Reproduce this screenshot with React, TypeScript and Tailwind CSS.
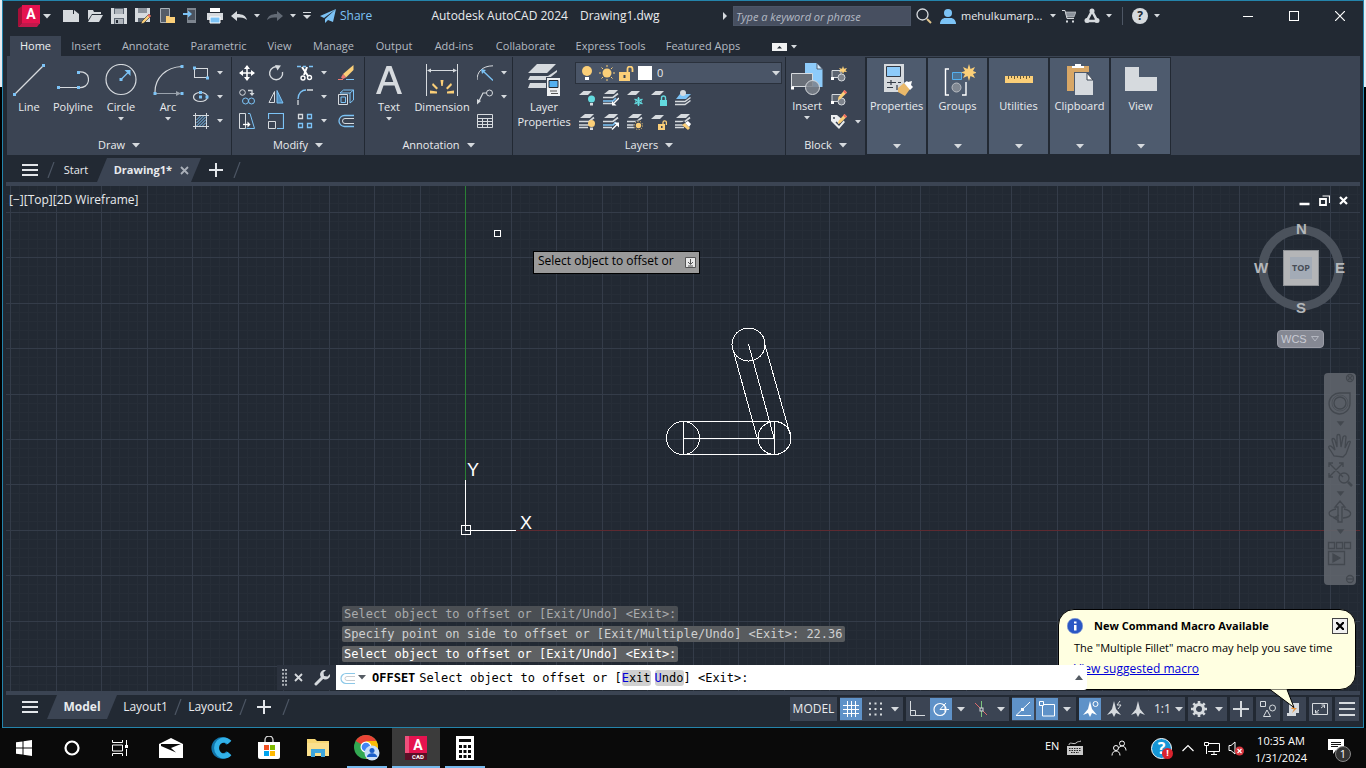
import React from "react";

type Kids = { children?: React.ReactNode };

const G = "#d6dade";
const B = "#7cc3f6";
const Y = "#fbcf78";
const P = "#3b4453";

function Ico({ s = 16, w, h, children, label }: Kids & { s?: number; w?: number; h?: number; label?: string }) {
  const ww = w ?? s;
  const hh = h ?? s;
  return (
    <svg width={ww} height={hh} viewBox={`0 0 ${ww} ${hh}`} fill="none" className="shrink-0" aria-hidden={label ? undefined : true} aria-label={label}>
      {children}
    </svg>
  );
}

const Caret = () => (
  <Ico w={6} h={4}><path d="M0 0h6L3 3.6z" fill={G} /></Ico>
);
const BigCaret = () => (
  <Ico w={8} h={5}><path d="M0 0h8L4 4.6z" fill={G} /></Ico>
);

function Big({ icon, label, caret, width, lead = "leading-4" }: { icon: React.ReactNode; label: React.ReactNode; caret?: boolean; width: string; lead?: string }) {
  return (
    <button className={`flex shrink-0 flex-col items-center whitespace-nowrap text-[#e9ebee] ${width} ${lead}`}>
      {icon}
      <span className="mt-[3px]">{label}</span>
      {caret && <span className="mt-[2px]"><Caret /></span>}
    </button>
  );
}

function Small({ icon, label, caret }: { icon: React.ReactNode; label: string; caret?: boolean }) {
  return (
    <button aria-label={label} className="flex h-6 items-center gap-2">
      {icon}
      {caret && <Caret />}
    </button>
  );
}

function Panel({ title, width, children }: Kids & { title: string; width: string }) {
  return (
    <section className={`flex shrink-0 flex-col border-r border-[#222933] ${width}`}>
      <div className="flex flex-1 pt-[7px]">{children}</div>
      <button className="flex h-5 items-center justify-center gap-[7px] text-[#e9ebee]">
        {title} <BigCaret />
      </button>
    </section>
  );
}

function Collapsed({ label, icon }: { label: string; icon: React.ReactNode }) {
  return (
    <button className="flex w-[61px] shrink-0 flex-col items-center border border-[#222933] bg-[#4e5b6e] pt-[4px] pb-[5px] leading-4 text-[#e9ebee]">
      {icon}
      <span className="whitespace-nowrap">{label}</span>
      <span className="mt-auto"><BigCaret /></span>
    </button>
  );
}

const sq = (x: number, y: number, c = B) => <rect x={x - 1.5} y={y - 1.5} width={3} height={3} fill={c} />;

/* ---- Draw ---- */
const LineI = <Ico s={32}><path d="M2 30L30 2" stroke={G} strokeWidth={1.2} />{sq(1.5, 30.5)}{sq(30.5, 1.5)}</Ico>;
const PolyI = <Ico s={32}><path d="M1.5 23.5h20c4.5.5 10-1.5 10-8s-5.5-8-10-7.500" stroke={G} strokeWidth={1.2} />{sq(1.5, 23.5)}{sq(21.5, 23.5)}{sq(21.5, 8.5)}</Ico>;
const CircI = <Ico s={32}><circle cx={16} cy={15.5} r={15} stroke={G} strokeWidth={1.2} /><path d="M16 15.5L23 8.5" stroke={B} strokeWidth={1.3} /><path d="M25.5 6v6l-6-6z" fill={B} />{sq(16, 15.5)}</Ico>;
const ArcI = <Ico s={32}><path d="M3 28C3 14 14 3 30 2.5" stroke={G} strokeWidth={1.2} /><path d="M3 29.5h22" stroke="#9aa2ac" /><path d="M24 27v5l5-2.500z" fill="#9aa2ac" />{sq(3, 29.5)}{sq(30, 29.5)}{sq(30, 2.5)}</Ico>;
const RectI = <Ico s={16}><rect x={1.5} y={3.5} width={13} height={9} stroke={G} />{sq(1.5, 3)}{sq(14.5, 13)}</Ico>;
const EllI = <Ico s={16}><ellipse cx={7.5} cy={8} rx={7} ry={4.5} stroke={G} strokeWidth={1.2} />{sq(7.5, 8)}{sq(14, 8)}{sq(7.5, 3.5)}</Ico>;
const HatchI = <Ico s={16}><path d="M2.5 0v16M13.5 0v16M0 2.5h16M0 13.5h16" stroke={G} /><path d="M3.5 7l4-4M3.5 10l7-7M3.5 13l9.500-9.500M6.500 13l6.500-6.500M9.500 13l3.500-3.500" stroke={B} /></Ico>;

/* ---- Modify ---- */
const MoveI = <Ico s={16}><path d="M8 1v14M1 8h14" stroke="#fff" strokeWidth={1.6} /><path d="M8 0l3 4H5zM8 16l3-4H5zM0 8l4-3v6zM16 8l-4-3v6z" fill="#fff" /></Ico>;
const RotI = <Ico s={16}><path d="M10.5 2.200A6.500 6.500 0 1 0 14.500 7" stroke={G} strokeWidth={1.4} /><path d="M7 0l6 .5-3.500 5z" fill={G} /></Ico>;
const TrimI = <Ico s={16}><path d="M0 1.5h4M6 1.5h3M12 1.500h4" stroke={B} strokeWidth={1.4} /><path d="M5 2l6 9M10 2L7 10" stroke="#fff" strokeWidth={2} /><circle cx={6} cy={13} r={2} stroke="#fff" strokeWidth={1.4} /><circle cx={12.5} cy={12.5} r={2} stroke="#fff" strokeWidth={1.4} /></Ico>;
const EraseI = <Ico s={16}><path d="M15.5 0v5L8 12.500 5 9z" fill={Y} /><path d="M5 9l3 3.500-3 1.500-2-1.500z" fill="#ef7a72" /><path d="M0 14.500h5" stroke="#ef7a72" /><path d="M8 14.500h8" stroke={B} /></Ico>;
const CopyI = <Ico s={16}><circle cx={3.5} cy={3.5} r={2.8} stroke={G} /><path d="M9 1.500h4v3" stroke={G} strokeWidth={1.3} /><path d="M10.500 4h5L13 7z" fill={G} /><circle cx={6.5} cy={12} r={3} stroke={B} /><circle cx={12.5} cy={12} r={3} stroke={B} /></Ico>;
const MirrI = <Ico s={16}><path d="M6.500 2.500v11H1z" stroke={G} /><path d="M9 1.500l6 12.500H9z" stroke={B} fill="#4f8dbd" /></Ico>;
const FillI = <Ico s={16}><path d="M1 10C1 4 5 1 9 1" stroke={B} strokeWidth={1.3} /><path d="M1 11v5M10 1h6" stroke={G} strokeWidth={1.3} /></Ico>;
const ExplI = <Ico s={16}><path d="M.5 5.500h9v10h-9z" stroke={G} /><path d="M3 8h4.500v5.500H3z" stroke={B} /><path d="M2 4l3.500-3h10L12 4zM15.500 1v10L12 14V4" stroke={B} /></Ico>;
const StrI = <Ico s={16}><path d="M.5.5h6v15h-6z" stroke={G} /><path d="M9 .5h2l4.500 15h-8" stroke={B} /><path d="M4 11.500h6" stroke="#fff" strokeWidth={1.3} /><path d="M8.500 8.500v6l3-3z" fill="#fff" /></Ico>;
const ScaI = <Ico s={16}><path d="M.5 6V.5h15v15H9" stroke={B} strokeWidth={1.2} /><path d="M.5 8.500h7v7h-7z" stroke={G} /></Ico>;
const ArrI = <Ico s={16}><path d="M1.500 1.500h4v4h-4z" stroke={G} strokeWidth={1.3} /><path d="M10.500 1.500h4v4h-4zM1.500 10.500h4v4h-4zM10.500 10.500h4v4h-4z" stroke={B} strokeWidth={1.3} /></Ico>;
const OffI = <Ico s={16}><path d="M16 2.500H6.500a5.500 5.500 0 0 0 0 11H16" stroke={B} strokeWidth={1.3} /><path d="M16 5.500H7a2.500 2.500 0 0 0 0 5H16" stroke={G} /></Ico>;

/* ---- Annotation ---- */
const TextI = <Ico s={32}><path fillRule="evenodd" d="M13.500 2h5L29 30h-4.500l-3-8.500h-11L7.500 30H3zM16 6.500L11.700 18h8.600z" fill={G} /></Ico>;
const DimI = <Ico s={32}><path d="M.5 0v32M31.500 0v32M2 6.500h28" stroke={G} /><path d="M1 6.500l4-2v4zM31 6.500l-4-2v4z" fill={G} /><path d="M4 26.500l7 1v2H4zM28 26.500l-7 1v2h7zM7 19l5 5-1.500 1.500L6 21zM25 19l-5 5 1.500 1.500L26 21zM14.500 16h3l-.8 6h-1.400z" fill={Y} /></Ico>;
const LeadArcI = <Ico s={16}><path d="M0 15C0 7 5 1 16 .8" stroke={G} /><path d="M16 15.500L6 6" stroke={B} strokeWidth={1.3} /><path d="M4 4l5 1-4 4z" fill={B} /></Ico>;
const LeadI = <Ico s={16}><circle cx={12.5} cy={4} r={3} stroke={G} /><path d="M9.500 4H6L1.500 13" stroke={G} strokeWidth={1.2} /><path d="M0 15.500V10l4 2z" fill={G} /></Ico>;
const TabI = <Ico s={16}><path d="M.5 1.500h15v13H.5zM.5 5.500h15M.5 8.500h15M.5 11.500h15M5.500 5v9M10.500 5v9" stroke={G} /></Ico>;

/* ---- Layers ---- */
const LPropI = <Ico s={32}><path d="M9 0h19l-9 9H0zM2 12h18l9-6v2l-10 8H0zM2 19h16v5H0z" fill={G} /><path d="M18 13h14v19H18z" fill={P} /><path d="M19 14h13v18H19z" fill="#eef0f2" /><path d="M21 16.500h9v7h-9z" fill="#54b0f0" stroke="#222933" /><path d="M22 27h7M23 29.500h7" stroke="#555" /></Ico>;
const stack = (b: boolean) => <><path d="M6 0h9l-4 4H1z" fill={G} /><path d="M0 7.500h10l5-4" stroke={G} strokeWidth={1.7} /><path d="M0 11h10l3-3" stroke={b ? B : G} strokeWidth={1.7} /><path d="M0 13.500h9" stroke={G} strokeWidth={1.5} /></>;
const flat = <path d="M4.500 1H13l-4 4H0z" fill={G} />;
const layerRowA: [string, React.ReactNode][] = [
  ["Off", <Ico s={16}>{flat}<circle cx={12.5} cy={9} r={3.5} fill="#63dbe0" /><path d="M11 13h3v2.500h-3z" fill={G} /></Ico>],
  ["Isolate", <Ico s={16}>{stack(true)}<path d="M16 8l-5 5" stroke="#fff" strokeWidth={1.4} /><path d="M9 15.500V11l4.500 4.500z" fill="#fff" /></Ico>],
  ["Freeze", <Ico s={16}>{flat}<path d="M11.500 7v9M7.500 9l8 5M15.500 9l-8 5" stroke="#63dbe0" strokeWidth={1.3} /><circle cx={11.5} cy={11.5} r={2.8} stroke="#63dbe0" /></Ico>],
  ["Lock", <Ico s={16}>{flat}<path d="M9 10h7v6H9z" fill="#63dbe0" /><path d="M10.500 10V8a2 2 0 0 1 4 0v2" stroke="#63dbe0" strokeWidth={1.4} /></Ico>],
  ["Make current", <Ico s={16}><path d="M5 4h11l-5 5H1z" fill={B} /><circle cx={8} cy={3} r={3} fill={G} /><path d="M0 11.500h10l5.500-4M0 14.500h10l5.500-4" stroke={G} strokeWidth={1.5} /></Ico>],
];
const layerRowB: [string, React.ReactNode][] = [
  ["Turn all on", <Ico s={16}>{stack(false)}<circle cx={12.5} cy={9.5} r={3.5} fill={Y} /><path d="M11 13.500h3V16h-3z" fill={G} /></Ico>],
  ["Unisolate", <Ico s={16}>{stack(true)}<path d="M9 15.500l5-5" stroke="#fff" strokeWidth={1.4} /><path d="M16 8.500v5L11 8.500z" fill="#fff" /></Ico>],
  ["Thaw all", <Ico s={16}>{stack(false)}<circle cx={11.5} cy={11.5} r={5} fill={P} /><circle cx={11.5} cy={11.5} r={4.2} stroke={Y} strokeDasharray="1 1.6" /><circle cx={11.5} cy={11.5} r={2.7} fill={Y} /></Ico>],
  ["Unlock", <Ico s={16}>{flat}<path d="M7 10h7v6H7z" fill={Y} /><path d="M12 10V8.500a1.700 1.700 0 0 1 3.400 0V11" stroke={Y} strokeWidth={1.3} /><path d="M10 12h1.500v2H10z" fill={P} /></Ico>],
  ["Match layer", <Ico s={16}>{stack(false)}<path d="M6 9l3-2 7 6-3 3z" fill={P} /><path d="M7 11l3-2 5 5-2 2z" fill={Y} /><path d="M10 9l3-2 3 3-2 3z" fill="#fff" /></Ico>],
];

/* ---- Block ---- */
const InsI = <Ico s={32}><path d="M14 0h12l5.500 6v18H14z" fill="#8dcbfa" /><path d="M26 0l5.500 6H26z" fill="#d6ecfd" stroke={P} strokeWidth={0.8} /><path d="M.5 10.500h21v13H.5z" fill="#6a7079" stroke={G} /><circle cx={21.5} cy={24.5} r={7} fill="#7d838c" fillOpacity={0.85} stroke={G} />{sq(1.5, 25, "#fff")}</Ico>;
const blk = <><path d="M1 4.500h9v7H1z" stroke={G} fill="#5d6571" /><circle cx={10.5} cy={11.5} r={3.5} fill="#7d838c" stroke={G} />{sq(1.5, 12.5, "#fff")}</>;
const pencil = <><path d="M13.500 0L16 2.500 9.500 9 7 10l.5-3z" fill={Y} /><path d="M12 1.500L13.500 0 16 2.500 14.500 4z" fill="#ef6b62" /></>;
const CreateI = <Ico s={16}>{blk}<path d="M12 0l1 2.800 3-.8-1.500 2.300L16 6l-3-.3L12 8l-1-2.500L8 6l1.500-1.800L8 2l3 .8z" fill={Y} /></Ico>;
const EditI = <Ico s={16}>{blk}{pencil}</Ico>;
const AttrI = <Ico s={16}><path d="M0 1h6l8 7-6 7L0 7z" fill="#eceef0" /><circle cx={3} cy={4} r={1} fill={P} /><path d="M5 8l3 3 4-5" stroke={P} strokeWidth={1.5} />{pencil}</Ico>;

/* ---- Collapsed panels ---- */
const PropI = <Ico s={36}><path d="M5 2h20v28H5z" fill={G} /><path d="M7.500 4.500h14v10h-14z" fill="#8dcbfa" stroke="#333b47" /><path d="M8 20.500h9M8 25.500h6M12 18v5M18 23v5M19 20.500h3" stroke="#333b47" strokeWidth={1.2} /><path d="M19 26l6-5 6 6-5 7-7-4z" fill="#eab96a" /><path d="M25 21l3-2 1 1 4-1-1 4 2 2-3 3z" fill="#fff" /></Ico>;
const GrpI = <Ico s={36}><path d="M9 7H5.500v26H9M22 33h4V20" stroke="#fff" strokeWidth={1.4} /><path d="M12.500 10.500h9v7h-9z" fill="#4e7597" stroke="#54b0f0" /><circle cx={16.5} cy={25.5} r={4.5} fill="#818892" stroke="#b8bcc2" /><path d="M29 2l1.500 5L35 5l-2 4 4 1.500-4 1.500 2 4-4.500-2L29 19l-1.500-5L23 16l2-4-4-1.500L25 9l-2-4 4.500 2z" fill={Y} /></Ico>;
const UtilI = <Ico s={36}><path d="M4 14h28v7H4z" fill={Y} /><path d="M7.500 14v3M10.500 14v2M13.500 14v3M16.500 14v2M19.500 14v3M22.500 14v2M25.500 14v3M28.500 14v2" stroke="#6b5a35" /></Ico>;
const ClipI = <Ico s={36}><path d="M5 4h22v25H5z" fill="#d8a766" /><path d="M10 6V4h3V2h6v2h3v2z" fill="#fff" /><path d="M12 10h19v24H12z" fill="#4e5b6e" /><path d="M13 11h12l6 7v15H13z" fill={G} /><path d="M25 11l6 7h-6z" fill="#fff" stroke="#3b4453" /></Ico>;
const ViewI = <Ico s={36}><path d="M2 5h14v10h18v14H2z" fill={G} /></Ico>;

/* ---- Title bar icons ---- */
const Logo = <Ico w={24} h={24}><path d="M1 5l4-3v17l-4 4z" fill="#a50f38" /><path d="M5 1h18v19H5z" fill="#e5134f" /><path d="M1 23l4-4h18l-3 4z" fill="#c2184b" /></Ico>;
const NewI = <Ico s={16}><path d="M0 2h10v4h6v8H0z" fill={G} /><path d="M11 2l5 4h-5z" fill={G} /></Ico>;
const OpenI = <Ico s={16}><path d="M1 2h5l1 2h7v2H5L1 12z" fill={G} /><path d="M5 7h11l-4 7H1z" fill={G} /></Ico>;
const SaveI = <Ico s={16}><path d="M0 0h16v16H0z" fill={G} /><path d="M3 0h10v6H3zM3 10h10v6H3z" fill="#5d6672" /><path d="M4 1h8v5H4zM4 11h8v5H4z" fill="#aeb4bb" /><path d="M5 12h2v3H5z" fill="#222933" /></Ico>;
const SaveAsI = <Ico s={16}><path d="M0 0h15v14H0z" fill={G} /><path d="M3 0h9v5H3z" fill="#8b929b" /><path d="M3 10h8v4H3z" fill="#5d6672" /><path d="M14 6l2 2-7 7-3 1 1-3z" fill={Y} stroke="#222933" strokeWidth={0.6} /><path d="M14 6l2 2-1.500 1.500-2-2z" fill="#ef6b62" /></Ico>;
const WebOpenI = <Ico s={16}><path d="M1.500.5h9v14h-9z" fill="#555d68" stroke="#aab0b7" /><path d="M7 8h3l1 1h5v6H7z" fill={Y} /></Ico>;
const WebSaveI = <Ico s={16}><path d="M4 0h9v15H4z" fill="#7d858f" /><path d="M5 2h7v10H5z" fill="#4a525e" /><path d="M0 6h6" stroke={B} strokeWidth={2} /><path d="M5 2.500v7L9 6z" fill={B} /></Ico>;
const PrintI = <Ico s={16}><path d="M3 0h10v4H3z" fill="#fff" /><path d="M0 5h16v7H0z" fill={G} /><path d="M3 9h10v6H3z" fill="#7cc3f6" stroke="#fff" /></Ico>;
const UndoI = <Ico s={16}><path d="M6 3v3c6 0 9 2 10 6-3-2.500-6-2.500-10-2.500V13L0 8z" fill={G} /></Ico>;
const RedoI = <Ico s={16}><path d="M10 3v3C4 6 1 8 0 12c3-2.500 6-2.500 10-2.500V13l6-5z" fill="#626a75" /></Ico>;
const ShareI = <Ico s={16}><path d="M16 1L0 8l4 2zM16 1L5 11v4l3-3 5 2z" fill={B} /></Ico>;

const quickAccess: [string, React.ReactNode][] = [
  ["New", NewI], ["Open", OpenI], ["Save", SaveI], ["Save As", SaveAsI], ["Open from Web", WebOpenI], ["Save to Web", WebSaveI], ["Plot", PrintI], ["Undo", UndoI],
];

function Hamburger({ label }: { label: string }) {
  return (
    <button aria-label={label}><Ico s={16}><path d="M0 3h16M0 8h16M0 13h16" stroke="#e3e6ea" strokeWidth={2} /></Ico></button>
  );
}
const Slash = () => <Ico w={8} h={16}><path d="M7 0L1 16" stroke="#4d5664" strokeWidth={1.2} /></Ico>;
const Plus = ({ label }: { label: string }) => (
  <button aria-label={label}><Ico s={14}><path d="M7 0v14M0 7h14" stroke="#e3e6ea" strokeWidth={2} /></Ico></button>
);

function TitleBar() {
  return (
    <header className="flex h-[30px] items-center text-[#e9ebee]">
      <button aria-label="Application menu" className="relative ml-[14px] flex w-[24px]">
        {Logo}
        <span className="absolute inset-0 flex items-center justify-center pb-1 pl-1 font-['Roboto'] text-[14px] font-bold text-white">A</span>
      </button>
      <button aria-label="Application options" className="ml-[2px]"><BigCaret /></button>
      <div className="ml-3 flex items-center gap-2">
        {quickAccess.map(([n, ic]) => (
          <button key={n} aria-label={n}>{ic}</button>
        ))}
      </div>
      <button aria-label="Undo list" className="ml-[7px]"><Caret /></button>
      <button aria-label="Redo" className="ml-[7px]">{RedoI}</button>
      <button aria-label="Redo list" className="ml-[7px]"><Caret /></button>
      <button aria-label="Customize toolbar" className="ml-[7px]"><Ico w={8} h={8}><path d="M0 .5h8" stroke={G} /><path d="M0 3h8L4 7z" fill={G} /></Ico></button>
      <button className="ml-[9px] flex w-[52px] items-center gap-1 text-[12px] text-[#7cc3f6]">{ShareI}Share</button>
      <h1 className="flex flex-1 justify-center gap-3 text-[12px] whitespace-nowrap"><span>Autodesk AutoCAD 2024</span><span>Drawing1.dwg</span></h1>
      <Ico w={14} h={8}><path d="M4 0l4 4-4 4z" fill={G} /></Ico>
      <input aria-label="Search" placeholder="Type a keyword or phrase" className="h-5 w-[178px] border border-[#4b5566] bg-[#474f60] px-[2px] text-[11px] italic placeholder:text-[#b4bac4]" />
      <button aria-label="Find" className="ml-[5px]"><Ico s={16}><circle cx={6.5} cy={6.5} r={5.5} stroke={G} strokeWidth={1.3} /><path d="M11 11l4 4" stroke="#e0c48c" strokeWidth={2} /></Ico></button>
      <button className="ml-2 flex w-[117px] items-center gap-[5px]">
        <Ico s={16}><circle cx={8} cy={5} r={4} fill={B} /><path d="M0 16c0-4 3-6 5-6h6c2 0 5 2 5 6z" fill={B} /></Ico>
        <span className="w-[84px] text-left whitespace-nowrap">mehulkumarp...</span><Caret />
      </button>
      <button aria-label="App store" className="ml-[5px]"><Ico s={14}><path d="M0 1.500h3l2 8h7" stroke={G} /><path d="M3.500 3H14l-2 5H5z" fill="#8b929b" stroke={G} strokeWidth={0.6} /><path d="M4 11.500h2v2H4zM10 11.500h2v2h-2z" fill={G} /></Ico></button>
      <button aria-label="Autodesk app" className="ml-2 flex items-center gap-[6px]"><Ico s={16}><path d="M8 3L3 12.500M8 3l5 9.500M3 13h10" stroke={G} strokeWidth={2.6} /><circle cx={8} cy={3} r={2.5} fill={G} /><circle cx={3} cy={12.5} r={2.5} fill={G} /><circle cx={13} cy={12.5} r={2.5} fill={G} /></Ico><Caret /></button>
      <span className="mr-[9px] ml-[10px] h-[18px] w-px bg-[#4d5664]" />
      <button aria-label="Help" className="mr-[65px] flex items-center gap-[6px]">
        <span className="flex size-4 items-center justify-center rounded-full bg-[#d6dade] text-[12px] font-bold text-[#222933]">?</span><Caret />
      </button>
      <button aria-label="Minimize" className="flex w-[46px] justify-center"><Ico s={10}><path d="M0 5.500h10" stroke="#fff" /></Ico></button>
      <button aria-label="Maximize" className="flex w-[46px] justify-center"><Ico s={10}><rect x={0.5} y={0.5} width={9} height={9} stroke="#fff" /></Ico></button>
      <button aria-label="Close" className="flex w-[46px] justify-center"><Ico s={10}><path d="M0 0l10 10M10 0L0 10" stroke="#fff" strokeWidth={1.2} /></Ico></button>
    </header>
  );
}

const ribbonTabs: [string, string][] = [
  ["Insert", "w-[50px]"], ["Annotate", "w-[69px]"], ["Parametric", "w-[77px]"], ["View", "w-[45px]"], ["Manage", "w-[63px]"], ["Output", "w-[58px]"],
  ["Add-ins", "w-[62px]"], ["Collaborate", "w-[81px]"], ["Express Tools", "w-[89px]"], ["Featured Apps", "w-[96px]"],
];

function Ribbon() {
  return (
    <>
      <nav className="flex h-[25px] items-end pl-[7px] text-[#b4bac2]">
        <button className="h-5 w-[51px] bg-[#3b4453] text-[#eef0f2]">Home</button>
        {ribbonTabs.map(([t, w]) => (
          <button key={t} className={`h-5 whitespace-nowrap ${w}`}>{t}</button>
        ))}
        <button aria-label="Minimize ribbon" className="ml-[21px] flex h-[18px] items-center gap-1">
          <Ico w={15} h={8}><path d="M0 0h15v8H0z" fill="#f1f2f3" /><path d="M5 5.500h5L7.500 3z" fill="#222933" /></Ico><Caret />
        </button>
      </nav>
      <div className="mr-[3px] ml-1 flex h-[99px] bg-[#3b4453] pt-px">
        <Panel title="Draw" width="w-[225px]">
          <div className="flex flex-1 pl-px">
            <Big icon={LineI} label="Line" width="w-[42px]" />
            <Big icon={PolyI} label="Polyline" width="w-[46px]" />
            <Big icon={CircI} label="Circle" caret width="w-[50px]" />
            <Big icon={ArcI} label="Arc" caret width="w-[44px]" />
          </div>
          <div className="-mt-[3px] mr-[8px]">
            <Small label="Rectangle" icon={RectI} caret />
            <Small label="Ellipse" icon={EllI} caret />
            <Small label="Hatch" icon={HatchI} caret />
          </div>
        </Panel>
        <Panel title="Modify" width="w-[133px]">
          <div className="-mt-[3px] grid h-[72px] grid-cols-[29px_29px_41px_16px] pl-[7px]">
            <Small label="Move" icon={MoveI} /><Small label="Rotate" icon={RotI} /><Small label="Trim" icon={TrimI} caret /><Small label="Erase" icon={EraseI} />
            <Small label="Copy" icon={CopyI} /><Small label="Mirror" icon={MirrI} /><Small label="Fillet" icon={FillI} caret /><Small label="Explode" icon={ExplI} />
            <Small label="Stretch" icon={StrI} /><Small label="Scale" icon={ScaI} /><Small label="Array" icon={ArrI} caret /><Small label="Offset" icon={OffI} />
          </div>
        </Panel>
        <Panel title="Annotation" width="w-[148px]">
          <div className="flex flex-1 pl-px">
            <Big icon={TextI} label="Text" caret width="w-[46px]" />
            <Big icon={DimI} label="Dimension" width="w-[60px]" />
          </div>
          <div className="-mt-[3px] mr-[5px]">
            <Small label="Linear" icon={LeadArcI} caret />
            <Small label="Leader" icon={LeadI} caret />
            <Small label="Table" icon={TabI} />
          </div>
        </Panel>
        <Panel title="Layers" width="w-[273px]">
          <Big icon={LPropI} label={<>Layer<br />Properties</>} width="w-[62px]" lead="leading-[15px]" />
          <div className="-mt-[2px] mr-[3px] flex flex-1 flex-col">
            <div className="flex h-[22px] items-center border border-[#2a313c] bg-[#4a5567] pr-px pl-[5px]">
              <Ico s={14}><circle cx={6} cy={5} r={5} fill={Y} /><path d="M4 11h4v3H4z" fill="#fff" /></Ico>
              <span className="ml-1"><Ico s={16}><circle cx={8} cy={8} r={4.5} fill={Y} /><path d="M8 0v2M8 14v2M0 8h2M14 8h2M2.500 2.500L4 4M12 12l1.500 1.500M13.500 2.500L12 4M4 12l-1.500 1.500" stroke={Y} /></Ico></span>
              <span className="ml-1"><Ico s={15}><path d="M0 6h11v9H0z" fill={Y} /><path d="M8.500 6V3a2.500 2.500 0 0 1 5 0v3" stroke={Y} strokeWidth={1.8} /><path d="M4.500 9h2v3h-2z" fill={P} /></Ico></span>
              <span className="ml-1 size-[14px] bg-white" />
              <select aria-label="Current layer" className="h-full min-w-0 flex-1 appearance-none bg-transparent pl-[5px] text-[11px] text-[#e9ebee]"><option>0</option></select>
              <BigCaret />
            </div>
            <div className="mt-[2px] ml-1 flex h-6 items-center gap-2">{layerRowA.map(([n, i]) => <button key={n} aria-label={n}>{i}</button>)}</div>
            <div className="ml-1 flex h-6 items-center gap-2">{layerRowB.map(([n, i]) => <button key={n} aria-label={n}>{i}</button>)}</div>
          </div>
        </Panel>
        <Panel title="Block" width="w-[80px]">
          <div className="-mt-px flex flex-1"><Big icon={InsI} label="Insert" caret width="w-[42px]" /></div>
          <div className="-mt-[2px] mr-[4px]">
            <Small label="Create block" icon={CreateI} />
            <Small label="Edit block" icon={EditI} />
            <Small label="Edit attributes" icon={AttrI} caret />
          </div>
        </Panel>
        <Collapsed label="Properties" icon={PropI} />
        <Collapsed label="Groups" icon={GrpI} />
        <Collapsed label="Utilities" icon={UtilI} />
        <Collapsed label="Clipboard" icon={ClipI} />
        <Collapsed label="View" icon={ViewI} />
      </div>
    </>
  );
}

function FileTabs() {
  return (
    <nav className="flex h-[27px] items-center pt-[3px] pl-[19px] text-[#e9ebee]">
      <Hamburger label="File tab menu" />
      <span className="ml-[9px]"><Slash /></span>
      <button className="w-[42px] text-center">Start</button>
      <div className="flex h-full w-[104px] items-center justify-end gap-2 bg-[#3b4453] pr-[12px] [clip-path:polygon(10px_0,100%_0,calc(100%_-_10px)_100%,0_100%)]">
        <button className="font-bold whitespace-nowrap">Drawing1*</button>
        <button aria-label="Close drawing"><Ico s={9}><path d="M1 1l7 7M8 1L1 8" stroke="#aab0b9" strokeWidth={1.8} /></Ico></button>
      </div>
      <span className="mr-[10px] ml-[8px] flex"><Plus label="New drawing" /></span>
      <Slash />
    </nav>
  );
}

const steps = Array.from({ length: 340 }, (_, i) => i - 50);

function Grid() {
  return (
    <svg className="absolute inset-0 size-full" shapeRendering="crispEdges" aria-hidden="true">
      {[false, true].map((major) => (
        <g key={String(major)} stroke={major ? "#343c49" : "#262d37"}>
          {steps.filter((k) => (k % 5 === 0) === major).map((k) => {
            const x = Math.floor(459.5 + 9.1 * k) + 0.5;
            const y = Math.floor(344.2 + 9.08 * k) + 0.5;
            return (
              <React.Fragment key={k}>
                <line x1={x} x2={x} y1="0" y2="100%" />
                <line x1="0" x2="100%" y1={y} y2={y} />
              </React.Fragment>
            );
          })}
        </g>
      ))}
      <rect x="459" y="0" width="1" height="294" fill="#2a8034" />
      <rect x="510" y="344" width="100%" height="1" fill="#5e2a31" />
      <g transform="translate(-6 -186)" stroke="#fff" fill="none">
        <circle cx="748.5" cy="344.5" r="16.5" />
        <circle cx="683" cy="438" r="16.5" />
        <circle cx="774.5" cy="438" r="16.5" />
        <path d="M683 421.500H775M683 454.500H775M683.500 421v33M774.500 421v33M683 438.500h91M748.500 344L774 438M732 346L757.500 439M765 345L790 434" />
        <path d="M465.500 480V530.500H516M461.500 525.500h9v9h-9zM494.500 230.500h6v6h-6z" />
      </g>
      <g fill="#fff" fontFamily="Liberation Sans" fontSize="18" shapeRendering="auto">
        <text x="461" y="290">Y</text>
        <text x="514" y="343">X</text>
      </g>
    </svg>
  );
}

function ViewCube() {
  const face = "absolute font-['Liberation_Sans'] text-[15px] leading-4 font-bold text-[#b4b7ba]";
  return (
    <div className="absolute top-[34px] right-[12px] h-[130px] w-[94px]">
      <svg className="absolute top-[5px] left-[5px]" width="84" height="86" viewBox="0 0 84 86" fill="none" aria-hidden="true">
        <circle cx="42" cy="43" r="38" stroke="#4b525c" strokeWidth="9" />
      </svg>
      <span className={`${face} top-[1px] left-[42px]`}>N</span>
      <span className={`${face} top-[40px] left-0`}>W</span>
      <span className={`${face} top-[40px] right-[3px]`}>E</span>
      <span className={`${face} top-[80px] left-[42px]`}>S</span>
      <button className="absolute top-[30px] left-[29px] flex size-9 items-center justify-center border border-[#8e9195] bg-[#b4b5b7]">
        <span className="flex size-[22px] items-center justify-center bg-[#a3abb6] text-[9px] font-bold text-[#474d56]">TOP</span>
      </button>
      <button className="absolute top-[110px] left-[23px] flex h-[18px] w-[47px] items-center gap-1 rounded-[4px] border border-[#9a9ca6] bg-[#858893] pl-[3px] font-['Liberation_Sans'] text-[11px] text-[#c9cbd3]">
        WCS<Ico w={8} h={6}><path d="M.5.5h7L4 5z" stroke="#b4b7c0" /></Ico>
      </button>
    </div>
  );
}

function NavBar() {
  const c = "#43484f";
  return (
    <div className="absolute top-[187px] right-[4px] w-8 rounded-[4px] bg-[#5f646b]/90">
      <svg width="32" height="212" viewBox="0 0 32 212" fill="none" stroke={c} strokeWidth="1.300" role="img" aria-label="Navigation bar">
        <circle cx="26" cy="5" r="3.500" /><path d="M24 3l4 4M28 3l-4 4" />
        <path d="M16 20h10v11a10.500 10.500 0 1 1-10-11z" /><circle cx="16" cy="30" r="6" /><circle cx="16" cy="30" r="8" strokeWidth=".6" />
        <path d="M14 49h5l-2.500 3z" fill={c} />
        <path d="M10 83l-5-8c-1-2 1-3 3-1l3 3-3-10c0-2 2-2 3 0l2 7 0-11c0-2 3-2 3 0l1 11 2-10c1-2 3-1 3 0l-1 11 3-6c1-1 3-1 2 1l-4 11-3 3z" />
        <path d="M5 90l14 14M5 104l14-14M5 94v-4h4M15 90h4v4M5 100v4h4" /><circle cx="20" cy="105" r="5" /><path d="M24 109l4 4" strokeWidth="2.500" />
        <path d="M14 119h5l-2.500 3z" fill={c} />
        <path d="M14 149v-15h-3l5-6 5 6h-3v15z" /><path d="M12 136c-10 2-9 8 2 9M20 136c9 2 9 8-1 9M15 142l-5 3 5 3" />
        <path d="M14 157h5l-2.500 3z" fill={c} />
        <path d="M4.500 169.500h6v6h-6zM12.500 169.500h6v6h-6zM20.500 169.500h6v6h-6zM4.500 178.500h16v13h-16z" /><path d="M9 181l7 4-7 4z" fill={c} />
        <circle cx="26" cy="206" r="3.500" /><path d="M23 206h6" />
      </svg>
    </div>
  );
}

function Balloon() {
  return (
    <aside className="absolute right-[4px] bottom-px h-[81px] w-[298px] rounded-[16px] border border-black bg-[#ffffe1] text-black">
      <div className="flex items-center pt-[8px] pr-[7px] pl-[8px]">
        <Ico s={16}><circle cx={8} cy={8} r={7.8} fill="#2a57c4" stroke="#8ea5d8" strokeWidth={0.6} /><path d="M7 7h2.500v5.500H7zM7 3.500h2.500v2H7z" fill="#fff" /></Ico>
        <h2 className="ml-[11px] flex-1 font-bold whitespace-nowrap">New Command Macro Available</h2>
        <button aria-label="Close notification" className="flex size-4 items-center justify-center border border-[#444] bg-[#f1f1f1]"><Ico s={8}><path d="M0 0l8 8M8 0L0 8" stroke="#000" strokeWidth={2.2} /></Ico></button>
      </div>
      <p className="mt-[4px] pl-[15px] leading-[18px] whitespace-nowrap">The "Multiple Fillet" macro may help you save time</p>
      <a href="#macro" className="mt-[3px] ml-[15px] block text-[12px] leading-[18px] text-[#0000d8] underline">View suggested macro</a>
      <svg className="absolute top-[78px] left-[210px]" width="28" height="22" viewBox="0 0 28 22" aria-hidden="true">
        <path d="M1 1.500L25 19.500 18 1.500z" fill="#ffffe1" /><path d="M1 1.500L25 19.500 18 1.500" fill="none" stroke="#000" />
      </svg>
    </aside>
  );
}

function CommandLine() {
  const line = "w-fit rounded-[2px] px-[2px] leading-4 whitespace-pre";
  return (
    <div className="absolute bottom-px left-[271px] w-[810px] font-['DejaVu_Sans_Mono','Liberation_Mono',monospace] text-[12px]">
      <div className="mb-[3px] flex flex-col gap-1 pl-[65px]">
        <div className={`${line} bg-[#4a4e53] text-[#a9abad]`}>Select object to offset or [Exit/Undo] &lt;Exit&gt;:</div>
        <div className={`${line} bg-[#585b5e] text-[#cfd0d1]`}>Specify point on side to offset or [Exit/Multiple/Undo] &lt;Exit&gt;: 22.36</div>
        <div className={`${line} bg-[#5f6163] text-white`}>Select object to offset or [Exit/Undo] &lt;Exit&gt;:</div>
      </div>
      <div className="flex h-[25px]">
        <div className="flex w-[59px] items-center gap-[7px] bg-[#2b323e] pl-[5px]">
          <Ico w={5} h={17}><path d="M1 0v17M4 0v17" stroke={G} strokeWidth={1.5} strokeDasharray="2 1.7" /></Ico>
          <button aria-label="Close command line"><Ico s={9}><path d="M1 1l7 7M8 1L1 8" stroke={G} strokeWidth={1.8} /></Ico></button>
          <button aria-label="Customize" className="ml-[4px]"><Ico s={16}><path d="M2 14L9 7" stroke={G} strokeWidth={3} strokeLinecap="round" /><path d="M12 0L9.500 2.500 10 6l3.500.5L16 4a4.500 4.500 0 0 1-6.500 5A4.500 4.500 0 0 1 12 0z" fill={G} /></Ico></button>
        </div>
        <div className="flex flex-1 items-center rounded-r-[3px] bg-white pr-1 pl-1 whitespace-pre text-black">
          <Ico s={16}><path d="M15 3.500H6a4.500 4.500 0 0 0 0 10h9" stroke="#8cc8e8" strokeWidth={1.2} /><path d="M15 6.500H7a2 2 0 0 0 0 4h8" stroke="#c9cdd1" /></Ico>
          <span className="mr-[6px] ml-[2px]"><Ico w={8} h={5}><path d="M0 0h8L4 4.600z" fill="#555b63" /></Ico></span>
          <label htmlFor="cmd" className="flex items-center">
            <b>OFFSET</b><span className="ml-1">Select object to offset or [</span>
            <button className="rounded-[3px] bg-[#d0d0d0] leading-4"><span className="text-[#0000d8]">E</span>xit</button>
            <button className="ml-1 rounded-[3px] bg-[#d0d0d0] leading-4"><span className="text-[#0000d8]">U</span>ndo</button>
            <span>] &lt;Exit&gt;:</span>
          </label>
          <input id="cmd" className="min-w-0 flex-1 outline-none" />
          <button aria-label="Command history"><Ico w={8} h={5}><path d="M0 5h8L4 0z" fill="#555b63" /></Ico></button>
        </div>
      </div>
    </div>
  );
}

function Canvas() {
  return (
    <main className="relative mr-[3px] ml-[3px] min-h-[500px] flex-1 bg-[#222933]">
      <Grid />
      <div className="relative flex justify-between pt-[6px] pr-[12px] pl-[3px] text-[#e9ebee]">
        <button className="h-4 text-[12px] leading-4">[−][Top][2D Wireframe]</button>
        <div className="flex h-4 items-center gap-[9px]">
          <button aria-label="Minimize drawing"><Ico s={11}><path d="M.5 9h10" stroke="#fff" strokeWidth={2.5} /></Ico></button>
          <button aria-label="Restore drawing"><Ico s={11}><path d="M1 4h6v6H1z" stroke="#fff" strokeWidth={1.8} /><path d="M3.500 1h7v7" stroke="#fff" strokeWidth={1.2} /></Ico></button>
          <button aria-label="Close drawing window"><Ico s={9}><path d="M1 1l7 7M8 1L1 8" stroke="#fff" strokeWidth={2.2} /></Ico></button>
        </div>
      </div>
      <div role="tooltip" className="absolute top-[65px] left-[527px] flex h-[23px] w-[167px] items-center justify-between border border-black bg-[#9a9a9a] pr-[3px] pl-1 text-[12px] text-black">
        <span className="pb-[3px] whitespace-nowrap">Select object to offset or</span>
        <Ico s={11}><path d="M.5.5h10v10H.5z" fill="#e9e9e9" stroke="#555" /><path d="M5.500 2v5M3 5l2.500 2.500L8 5M3 9h5" stroke="#555" /></Ico>
      </div>
      <ViewCube />
      <NavBar />
      <Balloon />
      <CommandLine />
    </main>
  );
}

function SB({ on, label, children, w = "w-[22px]" }: Kids & { on?: boolean; label: string; w?: string }) {
  return (
    <button aria-label={label} className={`flex h-[22px] items-center justify-center ${w} ${on ? "bg-[#5f92c8]" : ""}`}>{children}</button>
  );
}
function SG({ children, w }: Kids & { w: string }) {
  return <div className={`flex h-6 shrink-0 items-center gap-[2px] bg-[#3b4453] ${w}`}>{children}</div>;
}

const star = "M9 1l2 8 5 6-5-2-2 4-2-4-5 2 5-6z";

function StatusBar() {
  return (
    <footer className="mt-1 flex h-8 items-start justify-between pr-[4px] text-[12px] text-[#e9ebee]">
      <nav className="flex h-6 items-center pl-[19px]">
        <Hamburger label="Layout menu" />
        <button className="ml-[9px] h-6 w-[70px] bg-[#3b4453] font-bold [clip-path:polygon(10px_0,100%_0,calc(100%_-_10px)_100%,0_100%)]">Model</button>
        <button className="w-[57px] text-center">Layout1</button>
        <Slash />
        <button className="w-[57px] text-center">Layout2</button>
        <Slash />
        <span className="mr-[11px] ml-[10px] flex"><Plus label="New layout" /></span>
        <Slash />
      </nav>
      <div className="flex gap-[3px] pt-[2px]">
        <button className="h-6 w-[47px] bg-[#3b4453]">MODEL</button>
        <SG w="w-[63px]">
          <SB on label="Grid"><Ico s={16}><path d="M4.500 0v16M8.500 0v16M12.500 0v16M0 4.500h16M0 8.500h16M0 12.500h16" stroke="#fff" /></Ico></SB>
          <SB label="Snap"><Ico s={14}><path d="M1 1.500h14M1 7h14M1 12.500h14" stroke={G} strokeWidth={2} strokeDasharray="2 3.5" /></Ico></SB>
          <SB label="Snap options" w="w-[14px]"><BigCaret /></SB>
        </SG>
        <SG w="w-[103px]">
          <SB label="Ortho"><Ico s={16}><path d="M1.500 0v14.500H16M1.500 9.500h5v5" stroke={G} /></Ico></SB>
          <SB on label="Polar tracking"><Ico s={16}><circle cx={7} cy={8.5} r={6} stroke="#fff" strokeWidth={1.2} /><path d="M7 8.500h9M7 8.500L13 2M12 6v5" stroke="#fff" /></Ico></SB>
          <SB label="Polar options" w="w-[14px]"><BigCaret /></SB>
          <SB label="Isometric"><Ico s={16}><path d="M2 2l12 12" stroke="#dc6a6a" /><path d="M8.500 0v16" stroke="#7bc47e" /><rect x={7} y={7} width={3} height={3} fill={P} stroke={G} /></Ico></SB>
          <SB label="Isometric options" w="w-[14px]"><BigCaret /></SB>
        </SG>
        <SG w="w-[64px]">
          <SB on label="Object snap tracking"><Ico s={16}><path d="M15 1L1 14.500h15" stroke="#fff" /><rect x={6} y={7} width={3} height={3} fill="#fff" /></Ico></SB>
          <SB on label="Object snap"><Ico s={16}><path d="M4 3.500h11.500v11.500H3.500V5" stroke="#fff" /><path d="M.5.5h4v4h-4z" fill="#5f92c8" stroke="#fff" /></Ico></SB>
          <SB label="Object snap options" w="w-[14px]"><BigCaret /></SB>
        </SG>
        <SG w="w-[106px]">
          <SB on label="Annotation visibility"><Ico s={18}><path d={star} fill="#fff" /><circle cx={14.5} cy={4} r={2.5} stroke="#fff" fill="#5f92c8" /></Ico></SB>
          <SB label="Auto scale"><Ico s={18}><path d={star} fill={G} /><path d="M15 1l-3 4h4l-3 4" stroke={G} /></Ico></SB>
          <SB label="Annotation scale"><Ico s={18}><path d={star} fill={G} /></Ico></SB>
          <button className="flex items-center gap-1 pl-[3px]">1:1<BigCaret /></button>
        </SG>
        <SG w="w-[39px]">
          <SB label="Workspace"><Ico s={16}><circle cx={8} cy={8} r={4.5} stroke={G} strokeWidth={3} /><path d="M8 0v3M8 13v3M0 8h3M13 8h3M2.300 2.300l2 2M11.700 11.700l2 2M13.700 2.300l-2 2M4.300 11.700l-2 2" stroke={G} strokeWidth={2.6} /></Ico></SB>
          <SB label="Workspace options" w="w-[14px]"><BigCaret /></SB>
        </SG>
        <SG w="w-[23px]"><SB label="Annotation monitor"><Ico s={16}><path d="M8 0v16M0 8h16" stroke={G} strokeWidth={2} /></Ico></SB></SG>
        <SG w="w-6"><SB label="Isolate objects" w="w-6"><Ico s={16}><path d="M.5.5h5v5h-5zM7 9l3.500 6.500h-7z" stroke={G} /><circle cx={12.5} cy={7} r={3} stroke={G} /></Ico></SB></SG>
        <SG w="w-[23px]"><SB label="Macro advisor"><Ico s={16}><path d="M3 2h10v10H3zM1 12h9v3H1z" fill={G} /><path d="M8 4l-3 4h3l-2 4 5-5H8z" fill="#e8923a" /></Ico></SB></SG>
        <SG w="w-[23px]"><SB label="Clean screen"><Ico s={16}><path d="M.5 2.500h15v11H.5z" stroke={G} /><path d="M9 7l4-3M12.500 7V4H9.500M7 9l-4 3M3.500 9v3h3" stroke={G} /></Ico></SB></SG>
        <SG w="w-6"><SB label="Customization" w="w-6"><Ico s={16}><path d="M0 2h16M0 8h16M0 14h16" stroke={G} strokeWidth={2} /></Ico></SB></SG>
      </div>
    </footer>
  );
}

function TB({ label, children, bar, active }: Kids & { label: string; bar?: string; active?: boolean }) {
  return (
    <button aria-label={label} className={`relative flex h-10 w-12 items-center justify-center ${active ? "bg-[#3b3b3b]" : ""}`}>
      {children}
      {bar && <span className={`absolute bottom-0 h-[2px] bg-[#76b9ed] ${bar}`} />}
    </button>
  );
}

function Taskbar() {
  return (
    <div className="flex h-10 justify-between bg-[#0a0a0a] text-white">
      <div className="flex">
        <TB label="Start menu"><Ico s={16}><path d="M0 2.300l6.500-.9v6.100H0zM7.500 1.200L16 0v7.500H7.500zM0 8.500h6.500v6.100L0 13.700zM7.500 8.500H16V16l-8.500-1.200z" fill="#fff" /></Ico></TB>
        <TB label="Cortana"><Ico s={16}><circle cx={8} cy={8} r={6.5} stroke="#fff" strokeWidth={2.2} /></Ico></TB>
        <TB label="Task view"><Ico s={16}><path d="M.5 0v2.500h10V0M.5 16v-2.500h10V16M.5 5h10v6H.5zM14.500 0v5M14.500 9v7" stroke="#fff" /><path d="M13 5h3v3h-3z" fill="#fff" /></Ico></TB>
        <div className="ml-[3px] flex gap-px">
          <TB label="Mail"><Ico w={24} h={20}><path d="M0 6L12 0l12 6v14H0z" fill="#fff" /><path d="M2 6h20L12 10l5 4.500L2 8z" fill="#0a0a0a" /></Ico></TB>
          <TB label="C app"><Ico s={24}><path d="M20.500 7A8 8.200 0 1 0 20.500 17" stroke="#1173a8" strokeWidth={5.5} /><path d="M21.500 6.500A7.500 8 0 1 0 21.500 17.500" stroke="#32b1e8" strokeWidth={5} /></Ico></TB>
          <TB label="Store"><Ico w={22} h={24}><path d="M7 6V4a4 4 0 0 1 8 0v2" stroke="#d8d8d8" strokeWidth={1.3} /><path d="M0 6h22v15a2 2 0 0 1-2 2H2a2 2 0 0 1-2-2z" fill="#fff" /><path d="M6 9h5v5H6z" fill="#f25022" /><path d="M12 9h5v5h-5z" fill="#7fba00" /><path d="M6 15h5v5H6z" fill="#00a4ef" /><path d="M12 15h5v5h-5z" fill="#ffb900" /></Ico></TB>
          <TB label="File Explorer"><Ico w={22} h={20}><path d="M0 1h8l2 2h12v15H0z" fill="#f7d774" /><path d="M0 5h22v13H0z" fill="#fbe08d" /><path d="M4 19v-8h14v8h-4v-4H8v4z" fill="#3ea6dd" /></Ico></TB>
          <TB label="Chrome" bar="inset-x-[4px]"><Ico s={26}>
            <circle cx={12} cy={12} r={12} fill="#33a852" /><path d="M12 12L1.600 6A12 12 0 0 1 22.400 6z" fill="#ea4335" /><path d="M12 6h10.400A12 12 0 0 1 12 24l5-9z" fill="#fbbc05" /><circle cx={12} cy={12} r={5.5} fill="#fff" /><circle cx={12} cy={12} r={4.3} fill="#4285f4" />
            <circle cx={18} cy={18} r={7.5} fill="#c9dff8" /><circle cx={18} cy={15.5} r={2.5} fill="#1b5fc9" /><path d="M13 22c0-5 10-5 10 0z" fill="#1b5fc9" /></Ico></TB>
          <TB label="AutoCAD" active bar="inset-x-0">
            <span className="relative flex h-6 w-[22px] flex-col items-center bg-[#e5134f] pl-1 font-['Roboto'] leading-none font-bold">
              <span className="absolute inset-y-0 left-0 w-1 bg-[#f0507c]" />
              <span className="pt-[2px] text-[14px]">A</span>
              <span className="absolute inset-x-0 bottom-0 bg-[#5c0f26] pl-1 text-center text-[6px] leading-[7px]">CAD</span>
            </span>
          </TB>
          <TB label="Calculator" bar="inset-x-[4px]"><Ico w={18} h={24}><path d="M0 0h18v24H0z" fill="#fff" /><path d="M3 3h12v3H3z" fill="#0a0a0a" /><path d="M3 10.500h12M3 15.500h12M3 20.500h12" stroke="#0a0a0a" strokeWidth={3} strokeDasharray="3 1.5" /></Ico></TB>
        </div>
      </div>
      <div className="flex items-center pr-[12px]">
        <button className="w-[22px] pb-1 text-left">EN</button>
        <button aria-label="Keyboard"><Ico s={16}><path d="M0 6h16v9H0z" fill="#c9c9c9" /><path d="M2 8.500h12M2 10.500h12M4 12.500h8" stroke="#222" strokeDasharray="1.5 1" /><path d="M2 5c0-4 5 0 7-2s3-1 5-2" stroke="#c9c9c9" /></Ico></button>
        <button aria-label="People" className="ml-[28px]"><Ico s={16}><circle cx={11} cy={3.5} r={2.5} stroke="#fff" /><circle cx={5} cy={8} r={2.5} stroke="#fff" /><path d="M1 15.500c0-6 8-6 8 0M8 7.500c3-3 7-1 7 3" stroke="#fff" /></Ico></button>
        <button aria-label="Help tips" className="relative ml-[24px] flex size-[21px] items-center justify-center rounded-full border border-white bg-[#1596d6] text-[16px] font-bold">
          ?<span className="absolute -right-[2px] -bottom-[1px] flex size-[11px] items-center justify-center rounded-full bg-[#d9232e] text-[9px]">!</span>
        </button>
        <button aria-label="Hidden icons" className="ml-[10px]"><Ico s={12}><path d="M.5 9L6 3.500 11.500 9" stroke="#fff" strokeWidth={1.2} /></Ico></button>
        <button aria-label="Network" className="ml-[10px]"><Ico s={16}><path d="M4 3.500h11.500v8H4M7 14.500h6M10 12v2.500M.5 2.500h4v3h-4zM2.500 6v8" stroke="#fff" /></Ico></button>
        <button aria-label="Volume" className="ml-[8px]"><Ico s={16}><path d="M1 5.500h2l4-3.500v12l-4-3.500H1z" stroke="#fff" /><circle cx={11.5} cy={11} r={4.5} fill="#d9363e" /><path d="M9.500 9l4 4M13.500 9l-4 4" stroke="#fff" strokeWidth={1.2} /></Ico></button>
        <button className="ml-[6px] w-[62px] pt-px text-center leading-[17px] whitespace-nowrap">10:35 AM<br />1/31/2024</button>
        <button aria-label="Notifications" className="relative ml-[14px] h-10 w-[28px]">
          <span className="absolute top-[11px] left-[2px]"><Ico w={16} h={15}><path d="M0 0h16v11H8l-3 4v-4H0z" fill="#fff" /><path d="M3 3.500h10M3 5.500h10M3 7.500h7" stroke="#111" /></Ico></span>
          <span className="absolute top-[18px] left-[9px] flex size-4 items-center justify-center rounded-full border border-[#888] bg-[#333]">1</span>
        </button>
      </div>
    </div>
  );
}

export default function App() {
  return (
    <div className="flex min-h-screen flex-col bg-black font-['Open_Sans','Noto_Sans',sans-serif] text-[11px]">
      <div className="flex flex-1 bg-[linear-gradient(#e8ecf2_0,#e8ecf2_87px,#000_87px)] pr-[2px] pl-[2px]">
        <div className="flex min-w-0 flex-1 flex-col overflow-hidden border border-[#2484ab] bg-[#222933]">
          <TitleBar />
          <Ribbon />
          <FileTabs />
          <div className="mx-[3px] h-1 bg-[#3b4453]" />
          <Canvas />
          <div className="mx-[3px] -mb-1 h-1 bg-[#3b4453]" />
          <StatusBar />
        </div>
      </div>
      <Taskbar />
    </div>
  );
}
